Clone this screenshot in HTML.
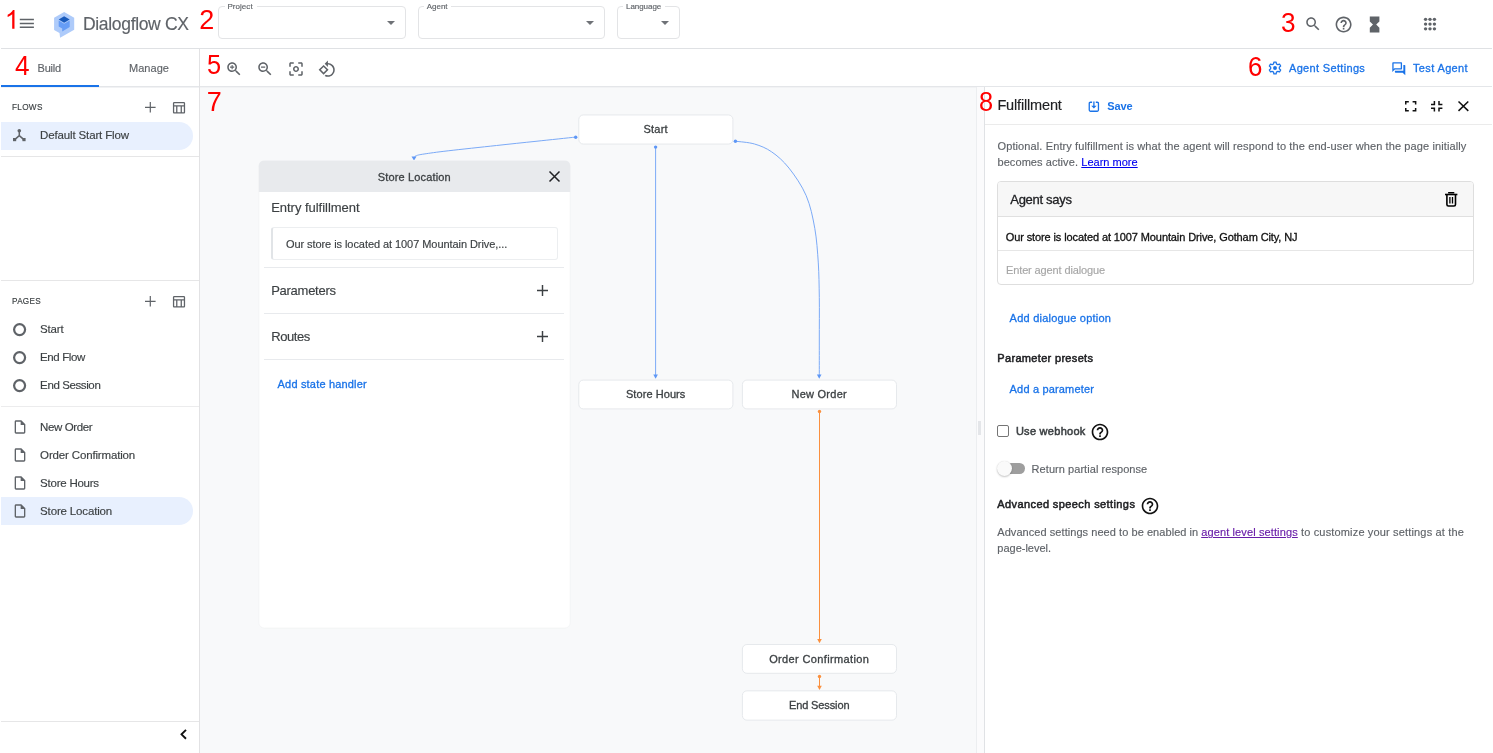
<!DOCTYPE html>
<html><head><meta charset="utf-8"><title>Dialogflow CX</title>
<style>
html,body{margin:0;padding:0;}
body{width:1493px;height:753px;overflow:hidden;background:#fff;position:relative;font-family:"Liberation Sans",sans-serif;}
.a{position:absolute;box-sizing:border-box;}
.t{position:absolute;white-space:pre;line-height:normal;font-family:"Liberation Sans",sans-serif;}
svg{position:absolute;overflow:visible;}
.node{position:absolute;box-sizing:border-box;background:#fff;border:1px solid #e4e7eb;border-radius:5px;}
.sel{position:absolute;box-sizing:border-box;background:#e8f0fe;border-radius:0 14px 14px 0;}
.hl{position:absolute;height:1px;background:#e3e5e8;}
.vl{position:absolute;width:1px;background:#e3e5e8;}
.fs{position:absolute;box-sizing:border-box;border:1px solid #e3e4e6;border-radius:4px;}
.gap{position:absolute;background:#fff;height:3px;}
#texts{position:absolute;left:0;top:0;width:1493px;height:753px;will-change:transform;}

</style></head>
<body>
<!-- canvas background -->
<div class="a" style="left:200px;top:87px;width:776px;height:666px;background:#f8f9fa"></div>
<!-- header / toolbar lines -->
<div class="hl" style="left:1px;top:48px;width:1491px;background:#dfe1e4"></div>
<div class="hl" style="left:1px;top:86px;width:1491px;background:#e4e6e9"></div>
<div class="hl" style="left:1px;top:87px;width:1491px;background:#f1f2f4"></div>
<div class="vl" style="left:199px;top:49px;height:704px;background:#e2e2e4"></div>
<!-- tab underline -->
<div class="a" style="left:1px;top:85px;width:98px;height:2px;background:#1a73e8"></div>

<!-- hamburger -->
<svg style="left:0;top:0" width="60" height="48" viewBox="0 0 60 48"><path d="M19.800 19.500H33.900M19.800 23.400H33.900M19.800 27.300H33.900" stroke="#5f6368" stroke-width="1.450" fill="none"/>
<!-- digit 1 -->
<path transform="translate(4.800 28.800) scale(0.2600)" d="M37.250 0H28.460V-56.000Q25.300-53 20.100-50Q15-47 10.900-45.500V-54Q18.200-57.400 23.700-62.300Q29.100-67.200 31.400-71.900H37.250Z" fill="#f00"/></svg>
<!-- logo -->
<svg style="left:0;top:0" width="90" height="48" viewBox="0 0 90 48">
  <path d="M64.150 12L74.200 17.700V29.700L60.100 37.800L59.500 33L54.100 29.900V17.700Z" fill="#aecbfa"/>
  <path d="M58.700 20.600L64.150 23.800L69.700 20.600V27L62.200 31.500V28.600L58.700 26.500Z" fill="#669df6"/>
  <path d="M64.150 16.250L69.700 19.500L64.150 22.700L58.700 19.500Z" fill="#185abc"/>
</svg>

<!-- header selects -->
<div class="fs" style="left:218px;top:6px;width:188px;height:33px"></div>
<div class="gap" style="left:224.5px;top:5px;width:32px"></div>
<div class="fs" style="left:418px;top:6px;width:187px;height:33px"></div>
<div class="gap" style="left:424px;top:5px;width:27px"></div>
<div class="fs" style="left:617px;top:6px;width:63px;height:33px"></div>
<div class="gap" style="left:623px;top:5px;width:42px"></div>
<svg style="left:386.5px;top:21.2px" width="8" height="4" viewBox="0 0 8 4"><path d="M0 0h8L4 4z" fill="#6f7277"/></svg>
<svg style="left:586px;top:21.2px" width="8" height="4" viewBox="0 0 8 4"><path d="M0 0h8L4 4z" fill="#6f7277"/></svg>
<svg style="left:660.6px;top:21.2px" width="8" height="4" viewBox="0 0 8 4"><path d="M0 0h8L4 4z" fill="#6f7277"/></svg>

<!-- header right icons -->
<svg style="left:1303.5px;top:14.7px" width="18" height="18" viewBox="0 0 24 24" fill="#5f6368"><path d="M15.5 14h-.79l-.28-.27C15.41 12.59 16 11.11 16 9.5 16 5.91 13.09 3 9.5 3S3 5.91 3 9.5 5.91 16 9.5 16c1.61 0 3.09-.59 4.23-1.57l.27.28v.79l5 4.99L20.49 19l-4.99-5zm-6 0C7.01 14 5 11.99 5 9.500 5 7.010 7.010 5 9.500 5 11.990 5 14 7.010 14 9.500 14 11.990 11.990 14 9.500 14z"/></svg>
<svg style="left:1334.2px;top:14.500px" width="19.2" height="19.2" viewBox="0 0 24 24" fill="#5f6368"><path d="M11 18h2v-2h-2v2zm1-16C6.48 2 2 6.48 2 12s4.48 10 10 10 10-4.48 10-10S17.520 2 12 2zm0 18c-4.410 0-8-3.590-8-8s3.590-8 8-8 8 3.590 8 8-3.590 8-8 8zm0-14c-2.210 0-4 1.790-4 4h2c0-1.100.9-2 2-2s2 .9 2 2c0 2-3 1.750-3 5h2c0-2.250 3-2.500 3-5 0-2.210-1.790-4-4-4z"/></svg>
<svg style="left:1364.900px;top:14.700px" width="19.2" height="19.2" viewBox="0 0 24 24" fill="#5f6368"><path d="M6 2v6h.01L6 8.010 10 12l-4 4 .01.010H6V22h12v-5.990h-.01L18 16l-4-4 4-3.990-.01-.010H18V2H6z"/></svg>
<svg style="left:1422.7px;top:16.900px" width="14" height="14" viewBox="0 0 13.6 13.6" fill="#5f6368">
<circle cx="2.5" cy="2.3" r="1.65"/><circle cx="6.8" cy="2.3" r="1.65"/><circle cx="11.1" cy="2.3" r="1.65"/>
<circle cx="2.5" cy="6.9" r="1.65"/><circle cx="6.8" cy="6.9" r="1.65"/><circle cx="11.1" cy="6.9" r="1.65"/>
<circle cx="2.5" cy="11.5" r="1.65"/><circle cx="6.8" cy="11.5" r="1.65"/><circle cx="11.1" cy="11.5" r="1.65"/>
</svg>

<!-- toolbar icons -->
<svg style="left:224.75px;top:59.800px" width="18" height="18" viewBox="0 0 24 24" fill="#5f6368"><path d="M15.5 14h-.79l-.28-.27C15.41 12.59 16 11.11 16 9.5 16 5.91 13.09 3 9.5 3S3 5.91 3 9.5 5.91 16 9.5 16c1.61 0 3.09-.59 4.23-1.57l.27.28v.79l5 4.99L20.49 19l-4.99-5zm-6 0C7.01 14 5 11.99 5 9.5S7.01 5 9.5 5 14 7.01 14 9.5 11.99 14 9.5 14z"/><path d="M12.300 10.200h-2.100v2.100H8.800v-2.100H6.700V8.800h2.100V6.700h1.400v2.100h2.100z"/></svg>
<svg style="left:255.8px;top:59.800px" width="18" height="18" viewBox="0 0 24 24" fill="#5f6368"><path d="M15.5 14h-.79l-.28-.27C15.41 12.59 16 11.11 16 9.5 16 5.91 13.09 3 9.5 3S3 5.91 3 9.5 5.91 16 9.5 16c1.61 0 3.09-.59 4.23-1.57l.27.28v.79l5 4.99L20.49 19l-4.99-5zm-6 0C7.01 14 5 11.99 5 9.5S7.01 5 9.5 5 14 7.01 14 9.5 11.99 14 9.5 14zM6.700 8.800h5.600v1.400H6.700z"/></svg>
<svg style="left:287px;top:59.6px" width="18" height="18" viewBox="0 0 24 24" fill="#5f6368"><path d="M5 15H3v4c0 1.100.9 2 2 2h4v-2H5v-4zM5 5h4V3H5c-1.100 0-2 .9-2 2v4h2V5zm14-2h-4v2h4v4h2V5c0-1.100-.9-2-2-2zm0 16h-4v2h4c1.100 0 2-.9 2-2v-4h-2v4zM12 8c-2.210 0-4 1.790-4 4s1.790 4 4 4 4-1.790 4-4-1.790-4-4-4zm0 6c-1.100 0-2-.9-2-2s.9-2 2-2 2 .9 2 2-.9 2-2 2z"/></svg>
<svg style="left:318.2px;top:59.8px" width="18.300" height="18.300" viewBox="0 0 24 24" fill="#5f6368"><path d="M7.340 6.410L.860 12.900l6.490 6.480 6.490-6.480-6.500-6.490zM3.690 12.900l3.660-3.660L11 12.900l-3.660 3.660-3.650-3.660zm15.670-6.260C17.610 4.880 15.300 4 13 4V.760L8.760 5 13 9.240V6c1.790 0 3.580.68 4.950 2.050 2.730 2.730 2.730 7.170 0 9.900C16.580 19.320 14.790 20 13 20c-.97 0-1.940-.21-2.840-.61l-1.490 1.490C10.020 21.620 11.510 22 13 22c2.300 0 4.610-.88 6.360-2.640 3.520-3.510 3.520-9.210 0-12.720z"/></svg>

<!-- toolbar right icons -->
<svg style="left:1267.600px;top:61.300px" width="14" height="14" viewBox="0 0 14 14"><path d="M8.43 2.84L8.14 1.11L5.86 1.11L5.57 2.84L4.11 3.68L2.47 3.06L1.33 5.05L2.68 6.16L2.68 7.84L1.33 8.95L2.47 10.94L4.11 10.32L5.57 11.16L5.86 12.89L8.14 12.89L8.43 11.16L9.89 10.32L11.53 10.94L12.67 8.95L11.32 7.84L11.32 6.16L12.67 5.05L11.53 3.06L9.89 3.68Z" fill="none" stroke="#1a73e8" stroke-width="1.250" stroke-linejoin="round"/><circle cx="7" cy="7" r="1.950" fill="#1a73e8"/></svg>
<svg style="left:1391px;top:60.6px" width="15.6" height="15.6" viewBox="0 0 24 24" fill="#1a73e8"><path d="M15 4v7H5.170L4 12.170V4h11m1-2H3c-.55 0-1 .45-1 1v14l4-4h10c.55 0 1-.45 1-1V3c0-.55-.45-1-1-1zm5 4h-2v9H6v2c0 .55.45 1 1 1h11l4 4V7c0-.55-.45-1-1-1z"/></svg>

<!-- ===== SIDEBAR ===== -->
<div class="sel" style="left:1px;top:122px;width:192px;height:28px"></div>
<div class="sel" style="left:1px;top:497px;width:192px;height:28px"></div>
<div class="hl" style="left:1px;top:156px;width:198px;background:#e6e6e7"></div>
<div class="hl" style="left:1px;top:280px;width:198px;background:#e6e6e7"></div>
<div class="hl" style="left:1px;top:406px;width:198px;background:#ececed"></div>
<div class="hl" style="left:1px;top:721px;width:198px;background:#e6e6e7"></div>
<!-- plus / table icons -->
<svg style="left:145.4px;top:102.4px" width="10.6" height="10.6" viewBox="0 0 10.6 10.6"><path d="M5.3 0v10.6M0 5.3h10.6" stroke="#5f6368" stroke-width="1.2" fill="none"/></svg>
<svg style="left:170.500px;top:100.200px" width="15.400" height="15.400" viewBox="0 0 24 24" fill="#5f6368"><path d="M20 3H5c-1.100 0-2 .9-2 2v14c0 1.100.9 2 2 2h15c1.100 0 2-.9 2-2V5c0-1.100-.9-2-2-2zm0 2v3H5V5h15zm-5 14h-5v-9h5v9zM5 10h3v9H5v-9zm12 9v-9h3v9h-3z"/></svg>
<svg style="left:145.4px;top:296.2px" width="10.6" height="10.6" viewBox="0 0 10.6 10.6"><path d="M5.3 0v10.6M0 5.3h10.6" stroke="#5f6368" stroke-width="1.2" fill="none"/></svg>
<svg style="left:170.500px;top:294.100px" width="15.400" height="15.400" viewBox="0 0 24 24" fill="#5f6368"><path d="M20 3H5c-1.100 0-2 .9-2 2v14c0 1.100.9 2 2 2h15c1.100 0 2-.9 2-2V5c0-1.100-.9-2-2-2zm0 2v3H5V5h15zm-5 14h-5v-9h5v9zM5 10h3v9H5v-9zm12 9v-9h3v9h-3z"/></svg>
<!-- flow icon -->
<svg style="left:13.300px;top:129.300px" width="12.6" height="12.4" viewBox="0 0 12.6 12.4"><path d="M6.300 2.200V6.600L1.700 10.600M6.300 6.600L10.900 10.600" stroke="#5f6368" stroke-width="1.500" fill="none"/><circle cx="6.300" cy="1.800" r="1.800" fill="#5f6368"/><rect x="0" y="9" width="3.2" height="3.200" fill="#5f6368"/><rect x="9.400" y="9" width="3.200" height="3.200" fill="#5f6368"/></svg>
<!-- circles -->
<svg style="left:13.150px;top:322.60px" width="13.200" height="13.200" viewBox="0 0 13.200 13.200"><circle cx="6.600" cy="6.600" r="5.500" stroke="#5f6368" stroke-width="2.200" fill="none"/></svg>
<svg style="left:13.150px;top:350.60px" width="13.200" height="13.200" viewBox="0 0 13.200 13.200"><circle cx="6.600" cy="6.600" r="5.500" stroke="#5f6368" stroke-width="2.200" fill="none"/></svg>
<svg style="left:13.150px;top:378.60px" width="13.200" height="13.200" viewBox="0 0 13.200 13.200"><circle cx="6.600" cy="6.600" r="5.500" stroke="#5f6368" stroke-width="2.200" fill="none"/></svg>
<!-- page icons -->
<svg style="left:11.800px;top:418.600px" width="16" height="16" viewBox="0 0 24 24" fill="#5f6368"><path d="M14 2H6c-1.100 0-1.990.9-1.990 2L4 20c0 1.100.890 2 1.990 2H18c1.100 0 2-.9 2-2V8l-6-6zM6 20V4h7v5h5v11H6z"/></svg>
<svg style="left:11.800px;top:446.600px" width="16" height="16" viewBox="0 0 24 24" fill="#5f6368"><path d="M14 2H6c-1.100 0-1.990.9-1.990 2L4 20c0 1.100.890 2 1.990 2H18c1.100 0 2-.9 2-2V8l-6-6zM6 20V4h7v5h5v11H6z"/></svg>
<svg style="left:11.800px;top:474.600px" width="16" height="16" viewBox="0 0 24 24" fill="#5f6368"><path d="M14 2H6c-1.100 0-1.990.9-1.990 2L4 20c0 1.100.890 2 1.990 2H18c1.100 0 2-.9 2-2V8l-6-6zM6 20V4h7v5h5v11H6z"/></svg>
<svg style="left:11.800px;top:502.600px" width="16" height="16" viewBox="0 0 24 24" fill="#5f6368"><path d="M14 2H6c-1.100 0-1.990.9-1.990 2L4 20c0 1.100.890 2 1.990 2H18c1.100 0 2-.9 2-2V8l-6-6zM6 20V4h7v5h5v11H6z"/></svg>
<!-- collapse chevron -->
<svg style="left:179.6px;top:728.8px" width="7" height="10.6" viewBox="0 0 7 10.6"><path d="M6 0.800L1.500 5.300L6 9.800" stroke="#111" stroke-width="1.900" fill="none"/></svg>

<!-- ===== CANVAS ===== -->
<svg style="left:0;top:0" width="1493" height="753" viewBox="0 0 1493 753" fill="none">
  <g stroke="#7baaf7" stroke-width="1">
    <path d="M655.600 147V376"/>
    <path d="M735.5 141.2C738.7 141.7 748.5 142.2 754.5 144.0C760.5 145.8 766.0 147.9 771.7 151.9C777.5 155.9 783.2 160.8 789.0 168.1C794.8 175.4 801.9 185.6 806.2 195.7C810.5 205.8 812.8 217.2 814.8 228.4C816.8 239.6 817.5 251.4 818.3 262.9C819.0 274.4 819.1 284.5 819.3 297.4C819.5 310.2 819.3 326.9 819.3 340.0C819.3 353.1 819.3 370.0 819.3 376.0"/>
    <path d="M575.5 137.1C568.9 137.8 549.2 139.9 536.0 141.3C522.8 142.7 511.1 143.9 496.5 145.5C481.9 147.1 460.3 149.4 448.2 150.8C436.1 152.2 429.4 153.2 424.1 154.0C418.8 154.8 418.2 155.0 416.5 155.6C414.8 156.2 414.4 157.2 414.0 157.5"/>
  </g>
  <g fill="#5e97f6">
    <circle cx="655.600" cy="147.100" r="1.700"/><path d="M653.300 374.500h4.600l-2.300 4.200z"/>
    <circle cx="735.400" cy="141.200" r="1.700"/><path d="M816.900 374.500h4.600l-2.300 4.200z"/>
    <circle cx="575.700" cy="137.200" r="1.700"/><path d="M411.500 156.500h5l-2.500 4z"/>
  </g>
  <g stroke="#fa903e" stroke-width="1">
    <path d="M819.500 412V640"/>
    <path d="M819.500 677V687"/>
  </g>
  <g fill="#fa903e">
    <circle cx="819.500" cy="411.500" r="1.700"/><path d="M817.200 639h4.600l-2.300 4.200z"/>
    <circle cx="819.500" cy="676.500" r="1.700"/><path d="M817.200 685.800h4.600l-2.300 4.200z"/>
  </g>
</svg>
<svg style="left:0;top:0" width="1493" height="753" viewBox="0 0 1493 753"><rect x="578.80" y="114.95" width="154.100" height="29.100" rx="4.500" fill="#fff" stroke="#e6e9ec" stroke-width="1"/><rect x="578.80" y="380.10" width="154.100" height="28.800" rx="4.500" fill="#fff" stroke="#e6e9ec" stroke-width="1"/><rect x="742.40" y="380.10" width="154.100" height="28.800" rx="4.500" fill="#fff" stroke="#e6e9ec" stroke-width="1"/><rect x="742.40" y="644.50" width="154.100" height="28.800" rx="4.500" fill="#fff" stroke="#e6e9ec" stroke-width="1"/><rect x="742.40" y="690.85" width="154.100" height="29.300" rx="4.500" fill="#fff" stroke="#e6e9ec" stroke-width="1"/></svg>

<!-- store location card -->
<svg style="left:0;top:0" width="1493" height="753" viewBox="0 0 1493 753"><rect x="258.800" y="160.700" width="311.400" height="467.400" rx="5.500" fill="#fff" stroke="#f1f3f4" stroke-width="0.800"/><path d="M258.800 192V166.200Q258.800 160.700 264.300 160.700H564.700Q570.200 160.700 570.200 166.200V192Z" fill="#e8eaed"/></svg>
<svg style="left:548.900px;top:171px" width="11" height="11" viewBox="0 0 11 11"><path d="M0.500 0.500L10.500 10.500M10.500 0.500L0.500 10.500" stroke="#202124" stroke-width="1.500" fill="none"/></svg>
<div class="a" style="left:271px;top:227px;width:287px;height:33px;border:1px solid #eceef0;border-left:2px solid #e1e4e7;border-radius:3px;background:#fff"></div>
<div class="hl" style="left:264px;top:267px;width:300px;background:#e8eaed"></div>
<div class="hl" style="left:264px;top:313px;width:300px;background:#e8eaed"></div>
<div class="hl" style="left:264px;top:359px;width:300px;background:#e8eaed"></div>
<svg style="left:536.500px;top:284.800px" width="11" height="11" viewBox="0 0 11 11"><path d="M5.500 0v11M0 5.500h11" stroke="#3c4043" stroke-width="1.450" fill="none"/></svg>
<svg style="left:536.500px;top:330.800px" width="11" height="11" viewBox="0 0 11 11"><path d="M5.500 0v11M0 5.500h11" stroke="#3c4043" stroke-width="1.450" fill="none"/></svg>

<!-- ===== RIGHT PANEL ===== -->
<div class="a" style="left:976px;top:87px;width:517px;height:666px;background:#fff"></div>
<div class="vl" style="left:976px;top:87px;height:666px;background:#eceef0"></div>
<div class="vl" style="left:984px;top:87px;height:666px;background:#e0e2e5"></div>
<div class="a" style="left:977px;top:87px;width:7px;height:666px;background:#fbfbfc"></div>
<div class="a" style="left:978px;top:421px;width:3px;height:14px;background:#e4e6e9"></div>
<div class="hl" style="left:985px;top:124px;width:507px;background:#ebebeb"></div>
<!-- save icon -->
<svg style="left:1088px;top:100.800px" width="12" height="11.500" viewBox="0 0 12 11.500" fill="none" stroke="#1a73e8"><path d="M4.100 1.250H2.400Q1.250 1.250 1.250 2.400V9.100Q1.250 10.250 2.400 10.250H9.300Q10.450 10.250 10.450 9.100V2.400Q10.450 1.250 9.300 1.250H7.800" stroke-width="1.300"/><path d="M5.900 0.600V5.200" stroke-width="1.300"/><path d="M3.200 4.700H8.600L5.900 7.600Z" fill="#1a73e8" stroke="none"/></svg>
<!-- window icons -->
<svg style="left:1404.500px;top:100.500px" width="11.400" height="10.600" viewBox="0 0 11.400 10.600" fill="none" stroke="#111" stroke-width="1.500"><path d="M0.750 3.600V0.750H3.800M7.600 0.750H10.650V3.600M10.650 7V9.850H7.600M3.800 9.850H0.750V7"/></svg>
<svg style="left:1431px;top:100.500px" width="11.400" height="10.600" viewBox="0 0 11.400 10.600" fill="none" stroke="#111" stroke-width="1.500"><path d="M0 3.400H3.400V0M8 0V3.400H11.400M11.400 7.200H8V10.600M3.400 10.600V7.200H0"/></svg>
<svg style="left:1457.800px;top:100.600px" width="10.800" height="10.400" viewBox="0 0 10.800 10.400"><path d="M0.500 0.500L10.300 9.900M10.300 0.500L0.500 9.900" stroke="#111" stroke-width="1.500" fill="none"/></svg>
<!-- agent says box -->
<div class="a" style="left:997px;top:181px;width:477px;height:104px;border:1px solid #dedede;border-radius:4px;background:#fff;overflow:hidden">
  <div class="a" style="left:0;top:0;width:475px;height:34px;background:#f7f7f7"></div>
  <div class="hl" style="left:0;top:34px;width:475px;background:#e0e0e0"></div>
  <div class="hl" style="left:0;top:68px;width:475px;background:#e6e6e6"></div>
</div>
<!-- trash -->
<svg style="left:1445.300px;top:191.800px" width="12.400" height="14.800" viewBox="0 0 12.400 14.800" fill="none" stroke="#000"><path d="M0 2.500H12.400" stroke-width="1.600"/><path d="M3.800 1.500V0.700H8.600V1.500" stroke-width="1.400"/><path d="M1.900 3V12.500Q1.900 14 3.400 14H9Q10.500 14 10.500 12.500V3" stroke-width="1.600"/><path d="M4.900 5V11.600M7.500 5V11.600" stroke-width="1.300"/></svg>
<!-- checkbox -->
<div class="a" style="left:997.300px;top:424.800px;width:12.200px;height:12.200px;border:1.500px solid #757575;border-radius:2px"></div>
<!-- help icons -->
<svg style="left:1090px;top:421.500px" width="20" height="20" viewBox="0 0 24 24" fill="#111"><path d="M11 18h2v-2h-2v2zm1-16C6.480 2 2 6.480 2 12s4.480 10 10 10 10-4.480 10-10S17.520 2 12 2zm0 18c-4.410 0-8-3.590-8-8s3.590-8 8-8 8 3.590 8 8-3.590 8-8 8zm0-14c-2.210 0-4 1.790-4 4h2c0-1.100.9-2 2-2s2 .9 2 2c0 2-3 1.750-3 5h2c0-2.250 3-2.500 3-5 0-2.210-1.790-4-4-4z"/></svg>
<svg style="left:1140px;top:496px" width="20" height="20" viewBox="0 0 24 24" fill="#111"><path d="M11 18h2v-2h-2v2zm1-16C6.480 2 2 6.480 2 12s4.480 10 10 10 10-4.480 10-10S17.520 2 12 2zm0 18c-4.410 0-8-3.590-8-8s3.590-8 8-8 8 3.590 8 8-3.590 8-8 8zm0-14c-2.210 0-4 1.790-4 4h2c0-1.100.9-2 2-2s2 .9 2 2c0 2-3 1.750-3 5h2c0-2.250 3-2.500 3-5 0-2.210-1.790-4-4-4z"/></svg>
<!-- toggle -->
<div class="a" style="left:1001px;top:463.400px;width:24.400px;height:10.800px;border-radius:5.400px;background:#9e9e9e"></div>
<div class="a" style="left:997.300px;top:461px;width:15px;height:15px;border-radius:50%;background:#fafafa;box-shadow:0 1px 2px rgba(0,0,0,.22),0 0 1px rgba(0,0,0,.12)"></div>

<div id="texts">
<span class="t" style="left:83.00px;top:14.23px;font-size:17.5px;color:#5f6368;-webkit-text-stroke:0.15px;letter-spacing:-0.331px;">Dialogflow CX</span>
<span class="t" style="left:227.40px;top:2.22px;font-size:8px;color:#5f6368;-webkit-text-stroke:0.15px;letter-spacing:0.056px;">Project</span>
<span class="t" style="left:426.80px;top:2.22px;font-size:8px;color:#5f6368;-webkit-text-stroke:0.15px;letter-spacing:-0.041px;">Agent</span>
<span class="t" style="left:626.00px;top:2.22px;font-size:8px;color:#5f6368;-webkit-text-stroke:0.15px;letter-spacing:-0.049px;">Language</span>
<span class="t" style="left:37.60px;top:61.98px;font-size:11px;color:#5f6368;-webkit-text-stroke:0.15px;letter-spacing:-0.214px;">Build</span>
<span class="t" style="left:129.00px;top:61.98px;font-size:11px;color:#5f6368;-webkit-text-stroke:0.15px;letter-spacing:0.039px;">Manage</span>
<span class="t" style="left:1289.00px;top:61.98px;font-size:11px;color:#1a73e8;-webkit-text-stroke:0.3px;letter-spacing:0.331px;">Agent Settings</span>
<span class="t" style="left:1413.00px;top:61.98px;font-size:11px;color:#1a73e8;-webkit-text-stroke:0.3px;letter-spacing:0.362px;">Test Agent</span>
<span class="t" style="left:12.00px;top:102.61px;font-size:8.2px;color:#3c4043;-webkit-text-stroke:0.15px;letter-spacing:0.315px;">FLOWS</span>
<span class="t" style="left:40.10px;top:129.31px;font-size:11.5px;color:#3c4043;-webkit-text-stroke:0.15px;letter-spacing:-0.145px;">Default Start Flow</span>
<span class="t" style="left:12.00px;top:296.51px;font-size:8.2px;color:#3c4043;-webkit-text-stroke:0.15px;letter-spacing:0.278px;">PAGES</span>
<span class="t" style="left:40.10px;top:322.91px;font-size:11.5px;color:#3c4043;-webkit-text-stroke:0.15px;letter-spacing:-0.179px;">Start</span>
<span class="t" style="left:40.10px;top:350.91px;font-size:11.5px;color:#3c4043;-webkit-text-stroke:0.15px;letter-spacing:-0.405px;">End Flow</span>
<span class="t" style="left:40.10px;top:378.91px;font-size:11.5px;color:#3c4043;-webkit-text-stroke:0.15px;letter-spacing:-0.389px;">End Session</span>
<span class="t" style="left:40.10px;top:420.51px;font-size:11.5px;color:#3c4043;-webkit-text-stroke:0.15px;letter-spacing:-0.390px;">New Order</span>
<span class="t" style="left:40.10px;top:448.51px;font-size:11.5px;color:#3c4043;-webkit-text-stroke:0.15px;letter-spacing:-0.155px;">Order Confirmation</span>
<span class="t" style="left:40.10px;top:476.51px;font-size:11.5px;color:#3c4043;-webkit-text-stroke:0.15px;letter-spacing:-0.233px;">Store Hours</span>
<span class="t" style="left:40.10px;top:504.51px;font-size:11.5px;color:#3c4043;-webkit-text-stroke:0.15px;letter-spacing:-0.155px;">Store Location</span>
<span class="t" style="left:643.45px;top:123.28px;font-size:11px;color:#3c4043;-webkit-text-stroke:0.3px;letter-spacing:0.253px;">Start</span>
<span class="t" style="left:625.95px;top:388.28px;font-size:11px;color:#3c4043;-webkit-text-stroke:0.3px;letter-spacing:0.072px;">Store Hours</span>
<span class="t" style="left:791.45px;top:388.28px;font-size:11px;color:#3c4043;-webkit-text-stroke:0.3px;letter-spacing:0.257px;">New Order</span>
<span class="t" style="left:769.20px;top:652.78px;font-size:11px;color:#3c4043;-webkit-text-stroke:0.3px;letter-spacing:0.359px;">Order Confirmation</span>
<span class="t" style="left:788.95px;top:699.08px;font-size:11px;color:#3c4043;-webkit-text-stroke:0.3px;letter-spacing:-0.115px;">End Session</span>
<span class="t" style="left:377.80px;top:170.78px;font-size:11px;color:#3c4043;-webkit-text-stroke:0.3px;letter-spacing:0.154px;">Store Location</span>
<span class="t" style="left:271.20px;top:200.49px;font-size:13px;color:#3c4043;-webkit-text-stroke:0.15px;letter-spacing:-0.028px;">Entry fulfillment</span>
<span class="t" style="left:285.90px;top:237.98px;font-size:11px;color:#3c4043;-webkit-text-stroke:0.15px;letter-spacing:-0.064px;">Our store is located at 1007 Mountain Drive,...</span>
<span class="t" style="left:271.20px;top:282.69px;font-size:13px;color:#3c4043;-webkit-text-stroke:0.15px;letter-spacing:-0.270px;">Parameters</span>
<span class="t" style="left:271.20px;top:328.59px;font-size:13px;color:#3c4043;-webkit-text-stroke:0.15px;letter-spacing:-0.401px;">Routes</span>
<span class="t" style="left:277.60px;top:378.18px;font-size:11px;color:#1a73e8;-webkit-text-stroke:0.3px;letter-spacing:0.180px;">Add state handler</span>
<span class="t" style="left:997.40px;top:96.77px;font-size:14.5px;color:#202124;letter-spacing:-0.162px;-webkit-text-stroke:0.15px;">Fulfillment</span>
<span class="t" style="left:1107.20px;top:100.18px;font-size:11px;color:#1a73e8;font-weight:700;letter-spacing:-0.126px;">Save</span>
<span class="t" style="left:997.50px;top:139.98px;font-size:11px;color:#5f6368;-webkit-text-stroke:0.15px;letter-spacing:0.112px;">Optional. Entry fulfillment is what the agent will respond to the end-user when the page initially</span>
<span class="t" style="left:997.50px;top:155.78px;font-size:11px;color:#5f6368;-webkit-text-stroke:0.15px;letter-spacing:0.068px;">becomes active.</span>
<span class="t" style="left:1081.30px;top:155.78px;font-size:11px;color:#0000ee;-webkit-text-stroke:0.15px;letter-spacing:0.013px;text-decoration:underline;">Learn more</span>
<span class="t" style="left:1010.30px;top:191.89px;font-size:13px;color:#202124;-webkit-text-stroke:0.3px;letter-spacing:-0.303px;">Agent says</span>
<span class="t" style="left:1005.70px;top:230.78px;font-size:11px;color:#111;-webkit-text-stroke:0.3px;letter-spacing:-0.106px;">Our store is located at 1007 Mountain Drive, Gotham City, NJ</span>
<span class="t" style="left:1006.00px;top:264.18px;font-size:11px;color:#a6a6a6;-webkit-text-stroke:0.15px;letter-spacing:-0.127px;">Enter agent dialogue</span>
<span class="t" style="left:1009.60px;top:311.58px;font-size:11px;color:#1a73e8;-webkit-text-stroke:0.3px;letter-spacing:0.229px;">Add dialogue option</span>
<span class="t" style="left:997.30px;top:352.38px;font-size:11px;color:#202124;-webkit-text-stroke:0.5px;letter-spacing:0.324px;">Parameter presets</span>
<span class="t" style="left:1009.60px;top:383.38px;font-size:11px;color:#1a73e8;-webkit-text-stroke:0.3px;letter-spacing:0.164px;">Add a parameter</span>
<span class="t" style="left:1015.90px;top:424.88px;font-size:11px;color:#3c4043;-webkit-text-stroke:0.5px;letter-spacing:0.277px;">Use webhook</span>
<span class="t" style="left:1031.60px;top:463.08px;font-size:11px;color:#5f6368;-webkit-text-stroke:0.15px;letter-spacing:0.055px;">Return partial response</span>
<span class="t" style="left:997.30px;top:498.48px;font-size:11px;color:#202124;-webkit-text-stroke:0.5px;letter-spacing:0.399px;">Advanced speech settings</span>
<span class="t" style="left:997.30px;top:526.28px;font-size:11px;color:#5f6368;-webkit-text-stroke:0.15px;letter-spacing:0.057px;">Advanced settings need to be enabled in</span>
<span class="t" style="left:1201.20px;top:526.28px;font-size:11px;color:#681da8;-webkit-text-stroke:0.15px;letter-spacing:0.121px;text-decoration:underline;">agent level settings</span>
<span class="t" style="left:1301.00px;top:526.28px;font-size:11px;color:#5f6368;-webkit-text-stroke:0.15px;letter-spacing:0.159px;">to customize your settings at the</span>
<span class="t" style="left:997.30px;top:541.88px;font-size:11px;color:#5f6368;-webkit-text-stroke:0.15px;">page-level.</span>
<span class="t" style="left:199.19px;top:5.26px;font-size:27px;color:#f00;transform:scaleX(1.0);transform-origin:0.81px 0">2</span>
<span class="t" style="left:1280.64px;top:8.36px;font-size:27px;color:#f00;transform:scaleX(0.97);transform-origin:1.16px 0">3</span>
<span class="t" style="left:14.72px;top:51.27px;font-size:27px;color:#f00;transform:scaleX(0.97);transform-origin:0.68px 0">4</span>
<span class="t" style="left:207.13px;top:49.77px;font-size:27px;color:#f00;transform:scaleX(0.94);transform-origin:1.27px 0">5</span>
<span class="t" style="left:1248.37px;top:52.36px;font-size:27px;color:#f00;transform:scaleX(0.96);transform-origin:1.03px 0">6</span>
<span class="t" style="left:206.66px;top:86.77px;font-size:27px;color:#f00;transform:scaleX(1.0);transform-origin:1.24px 0">7</span>
<span class="t" style="left:979.07px;top:86.86px;font-size:27px;color:#f00;transform:scaleX(0.94);transform-origin:1.13px 0">8</span>
</div>
</body></html>
